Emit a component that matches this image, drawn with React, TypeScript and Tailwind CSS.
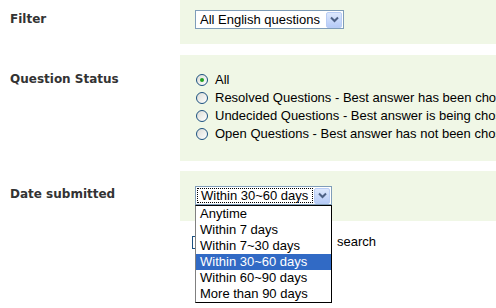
import React from 'react'

const body = "font-['Liberation_Sans',Arial,sans-serif] text-[13px] text-black"

function ComboArrow() {
  return (
    <div className="w-[16px] h-[16px] rounded-[2px] border border-[#b9cdf5] bg-gradient-to-b from-[#dde8fd] to-[#b6cbf7] flex items-center justify-center shrink-0">
      <svg width="9" height="7" viewBox="0 0 9 7">
        <path d="M1 1.5 L4.5 5 L8 1.5" fill="none" stroke="#4d6185" strokeWidth="2" />
      </svg>
    </div>
  )
}

function Radio({ checked }: { checked?: boolean }) {
  return (
    <span className="w-[12px] h-[12px] rounded-full border border-[#1c5180] bg-gradient-to-br from-[#dcdcd6] to-white flex items-center justify-center shrink-0">
      {checked && <span className="w-[4px] h-[4px] rounded-full bg-[#21a121]" />}
    </span>
  )
}

const statuses = [
  { label: 'All', checked: true },
  { label: 'Resolved Questions - Best answer has been chosen' },
  { label: 'Undecided Questions - Best answer is being chosen by voters' },
  { label: 'Open Questions - Best answer has not been chosen yet' },
]

const dates = ['Anytime', 'Within 7 days', 'Within 7~30 days', 'Within 30~60 days', 'Within 60~90 days', 'More than 90 days']

export default function App() {
  const label = "w-[180px] shrink-0 pl-[10px] font-['DejaVu_Sans',Verdana,sans-serif] font-bold text-[12px] leading-[16px] text-[#333]"
  const panel = 'flex-1 min-w-0 bg-[#f0f7e6] pl-[15px] overflow-hidden'

  return (
    <div className={`w-[496px] h-[308px] bg-white overflow-hidden ${body}`}>
      {/* Filter */}
      <div className="flex h-[44px]">
        <div className={`${label} pt-[11px]`}>Filter</div>
        <div className={`${panel} pt-[10px]`}>
          <div className="w-[149px] h-[19px] border border-[#7f9db9] bg-white flex items-center pl-[4px] pr-[1px]">
            <span className="flex-1 leading-[17px] whitespace-nowrap">All English questions</span>
            <ComboArrow />
          </div>
        </div>
      </div>

      {/* Question Status */}
      <div className="flex h-[106px] mt-[11px]">
        <div className={`${label} pt-[16px]`}>Question Status</div>
        <div className={`${panel} pt-[16px]`}>
          {statuses.map((s) => (
            <div key={s.label} className="flex items-center h-[18px] gap-[7px] pl-[1px] whitespace-nowrap">
              <Radio checked={s.checked} />
              <span className="leading-[18px]">{s.label}</span>
            </div>
          ))}
        </div>
      </div>

      {/* Date submitted */}
      <div className="flex h-[50px] mt-[10px] relative z-10">
        <div className={`${label} pt-[15px]`}>Date submitted</div>
        <div className={`${panel} pt-[15px] overflow-visible`}>
          <div className="relative w-[137px]">
            <div className="h-[19px] border border-[#7f9db9] bg-white flex items-center pl-[1px] pr-[1px] gap-[1px]">
              <span className="flex-1 h-[15px] border border-dotted border-black leading-[13px] pl-[3px] whitespace-nowrap">
                Within 30~60 days
              </span>
              <ComboArrow />
            </div>
            <ul className="absolute left-0 top-full w-[137px] bg-white border border-black border-l-[#808080]">
              {dates.map((d) => (
                <li
                  key={d}
                  className={`h-[16px] leading-[16px] pl-[4px] whitespace-nowrap ${
                    d === 'Within 30~60 days' ? 'bg-[#316ac5] text-white' : ''
                  }`}
                >
                  {d}
                </li>
              ))}
            </ul>
          </div>
        </div>
      </div>

      {/* Search option */}
      <div className="flex pt-[13px] pl-[192px] items-center">
        <span className="w-[13px] h-[13px] border border-[#1c5180] bg-white shrink-0" />
        <span className="ml-[132px] leading-[16px]">search</span>
      </div>
    </div>
  )
}
